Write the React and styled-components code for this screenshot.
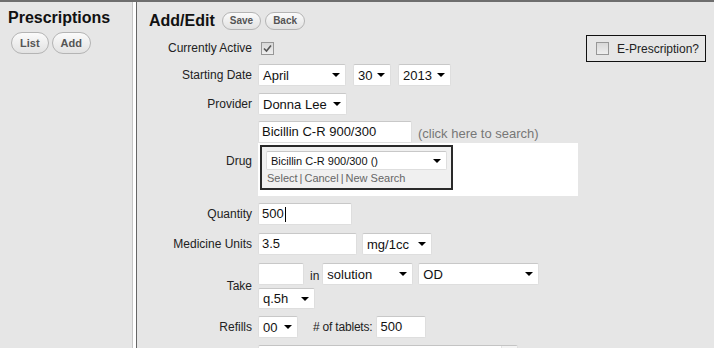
import React from 'react';
import styled, { createGlobalStyle } from 'styled-components';

const Global = createGlobalStyle`
  html, body { margin: 0; padding: 0; background: #fff; }
  body { font-family: "Liberation Sans", Arial, sans-serif; color: #222; }
  * { box-sizing: border-box; }
`;

const Page = styled.div`
  display: flex;
  height: 348px;
  border-top: 2px solid #6e6e6e;
  background: #fff;
  overflow: hidden;
`;

const Sidebar = styled.aside`
  width: 133px;
  flex: none;
  background: #e6e6e6;
  border-right: 1px solid #c6c6c6;
  padding: 7px 8px;
`;

const SideTitle = styled.h2`
  margin: 0;
  font-size: 16px;
  line-height: 18px;
  font-weight: bold;
  color: #111;
`;

const ButtonRow = styled.div`
  display: flex;
  gap: ${p => p.$gap}px;
  margin: ${p => p.$m || '0'};
`;

const PillButton = styled.button`
  height: ${p => (p.$small ? 18 : 22)}px;
  padding: 0 ${p => (p.$small ? 7 : 8)}px;
  border-radius: 11px;
  border: 1px solid #b4b4b4;
  background: linear-gradient(#fbfbfb, #e2e2e2);
  font-family: "Liberation Sans", Arial, sans-serif;
  font-size: ${p => (p.$small ? 10 : 11)}px;
  font-weight: bold;
  color: #555;
  line-height: 1;
  cursor: pointer;
`;

const Main = styled.main`
  flex: 1;
  margin-left: 3px;
  border-left: 1px solid #666;
  background: #e6e6e6;
  padding: 9px 8px 0 12px;
`;

const Header = styled.div`
  display: flex;
  align-items: center;
  height: 20px;
`;

const Title = styled.h1`
  margin: 0 7px 0 0;
  font-size: 16px;
  line-height: 20px;
  font-weight: bold;
  color: #111;
`;

const Content = styled.div`
  display: flex;
  align-items: flex-start;
`;

const FormCol = styled.div`
  flex: 1;
  display: flex;
  flex-direction: column;
`;

const Row = styled.div`
  display: flex;
  align-items: center;
  margin-top: ${p => p.$mt}px;
  min-height: ${p => p.$minH || 0}px;
`;

const Label = styled.div`
  width: 109px;
  flex: none;
  text-align: right;
  padding-right: 6px;
  padding-top: ${p => p.$pt || 0}px;
  font-size: 12px;
  color: #222;
`;

const Fields = styled.div`
  display: flex;
  flex-direction: column;
  gap: ${p => p.$gap || 0}px;
`;

const Line = styled.div`
  display: flex;
  align-items: center;
  gap: ${p => p.$gap || 0}px;
`;

const TextBox = styled.div`
  width: ${p => p.$w}px;
  height: 22px;
  background: #fff;
  border: 1px solid #dedede;
  border-top-color: #c8c8c8;
  border-radius: 2px;
  padding: 0 3px;
  font-size: 13px;
  line-height: 20px;
  color: #111;
  display: flex;
  align-items: center;
  white-space: nowrap;
`;

const Caret = styled.span`
  display: inline-block;
  width: 1px;
  height: 15px;
  background: #000;
  margin-left: 1px;
`;

const SelectBox = styled.div`
  width: ${p => p.$w}px;
  height: ${p => p.$h || 22}px;
  background: #fff;
  border: 1px solid #dedede;
  border-top-color: #c8c8c8;
  border-radius: 2px;
  padding: 0 5px 0 4px;
  font-size: ${p => p.$fs || 13}px;
  color: #111;
  display: flex;
  align-items: center;
  justify-content: space-between;
  white-space: nowrap;
`;

const Arrow = styled.span`
  width: 0;
  height: 0;
  border-left: 4px solid transparent;
  border-right: 4px solid transparent;
  border-top: 4px solid #000;
  flex: none;
`;

const Select = ({ w, h, fs, children }) => (
  <SelectBox $w={w} $h={h} $fs={fs}>
    <span>{children}</span>
    <Arrow />
  </SelectBox>
);

const CheckBox = styled.span`
  width: 13px;
  height: 13px;
  margin-left: ${p => p.$ml || 0}px;
  border: 1px solid #979797;
  background: linear-gradient(#d8d8d8, #eeeeee);
  display: inline-flex;
  align-items: center;
  justify-content: center;
  flex: none;
`;

const Hint = styled.span`
  margin-left: 6px;
  padding-top: 3px;
  font-size: 13px;
  color: #777;
  white-space: nowrap;
`;

const InlineText = styled.span`
  font-size: 12px;
  color: #222;
  padding-top: ${p => p.$pt || 0}px;
  margin: 0 ${p => p.$mr || 0}px 0 ${p => p.$ml || 0}px;
  letter-spacing: ${p => p.$ls || 0}px;
  white-space: nowrap;
`;

const DrugPanel = styled.div`
  width: 320px;
  height: 53px;
  background: #fff;
  padding: 2px;
`;

const DrugBox = styled.div`
  width: 193px;
  height: 45px;
  border: 2px solid #2a2a2a;
  background: #f0f0f0;
  padding: 4px;
`;

const Links = styled.div`
  display: flex;
  gap: 2px;
  margin-top: 2px;
  padding-left: 1px;
  font-size: 11px;
  line-height: 13px;
  color: #666;
`;

const EBox = styled.div`
  margin-top: 4px;
  height: 27px;
  border: 1px solid #111;
  padding: 0 6px 0 9px;
  display: flex;
  align-items: center;
  gap: 8px;
  font-size: 12px;
  color: #222;
`;

const WideBox = styled.div`
  width: 260px;
  height: 22px;
  background: #fff;
  border: 1px solid #dedede;
  border-top-color: #c4c4c4;
  border-radius: 2px;
  display: flex;
  justify-content: flex-end;
`;

const WideBoxEnd = styled.div`
  width: 16px;
  border-left: 1px solid #e4e4e4;
  background: #f4f4f4;
`;

const Spacer = styled.span`
  width: ${p => p.$w}px;
  flex: none;
`;

export default function App() {
  return (
    <>
      <Global />
      <Page>
        <Sidebar>
          <SideTitle>Prescriptions</SideTitle>
          <ButtonRow $gap={3} $m="5px 0 0 3px">
            <PillButton>List</PillButton>
            <PillButton>Add</PillButton>
          </ButtonRow>
        </Sidebar>
        <Main>
          <Header>
            <Title>Add/Edit</Title>
            <ButtonRow $gap={4}>
              <PillButton $small>Save</PillButton>
              <PillButton $small>Back</PillButton>
            </ButtonRow>
          </Header>
          <Content>
            <FormCol>
              <Row $mt={6} $minH={22}>
                <Label>Currently Active</Label>
                <CheckBox $ml={3}>
                  <svg width="9" height="9" viewBox="0 0 9 9">
                    <path d="M1 4.5 L3.5 7 L8 1.5" fill="none" stroke="#555" strokeWidth="1.6" />
                  </svg>
                </CheckBox>
              </Row>
              <Row $mt={5}>
                <Label>Starting Date</Label>
                <Line $gap={7}>
                  <Select w={88}>April</Select>
                  <Select w={38}>30</Select>
                  <Select w={53}>2013</Select>
                </Line>
              </Row>
              <Row $mt={7}>
                <Label>Provider</Label>
                <Select w={89}>Donna Lee</Select>
              </Row>
              <Row $mt={6}>
                <Label $pt={4}>Drug</Label>
                <Fields>
                  <Line>
                    <TextBox $w={154}>Bicillin C-R 900/300</TextBox>
                    <Hint>(click here to search)</Hint>
                  </Line>
                  <DrugPanel>
                    <DrugBox>
                      <Select w={181} h={19} fs={11}>Bicillin C-R 900/300 ()</Select>
                      <Links>
                        <span>Select</span>|<span>Cancel</span>|<span>New Search</span>
                      </Links>
                    </DrugBox>
                  </DrugPanel>
                </Fields>
              </Row>
              <Row $mt={7}>
                <Label>Quantity</Label>
                <TextBox $w={94}>500<Caret /></TextBox>
              </Row>
              <Row $mt={8}>
                <Label>Medicine Units</Label>
                <Line $gap={5}>
                  <TextBox $w={99}>3.5</TextBox>
                  <Select w={70}>mg/1cc</Select>
                </Line>
              </Row>
              <Row $mt={8}>
                <Label>Take</Label>
                <Fields $gap={3}>
                  <Line>
                    <TextBox $w={46} />
                    <InlineText $ml={6} $mr={3} $pt={3}>in</InlineText>
                    <Select w={91}>solution</Select>
                    <Spacer $w={5} />
                    <Select w={121}>OD</Select>
                  </Line>
                  <Line>
                    <Select w={57} h={21}>q.5h</Select>
                  </Line>
                </Fields>
              </Row>
              <Row $mt={7}>
                <Label>Refills</Label>
                <Line>
                  <Select w={40}>00</Select>
                  <InlineText $ml={15} $mr={4} $ls={-0.2}># of tablets:</InlineText>
                  <TextBox $w={50}>500</TextBox>
                </Line>
              </Row>
              <Row $mt={7}>
                <Label />
                <WideBox>
                  <WideBoxEnd />
                </WideBox>
              </Row>
            </FormCol>
            <EBox>
              <CheckBox />
              <span>E-Prescription?</span>
            </EBox>
          </Content>
        </Main>
      </Page>
    </>
  );
}
